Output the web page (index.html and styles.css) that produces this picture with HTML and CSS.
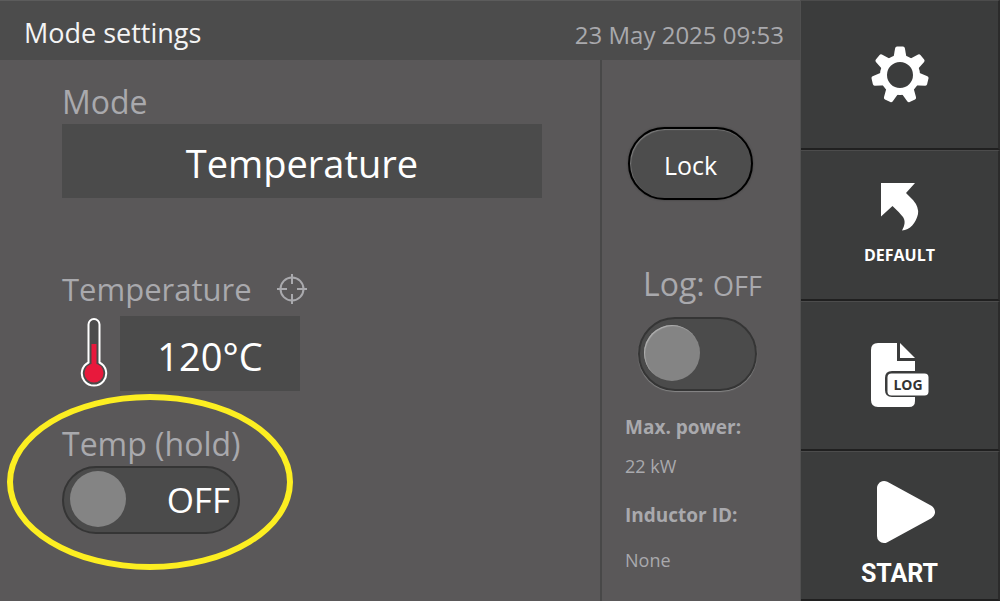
FILE: index.html
```html
<!DOCTYPE html>
<html lang="en">
<head>
    <meta charset="UTF-8">
    <meta name="viewport" content="width=device-width, initial-scale=1.0">
    <title>Mode settings</title>
    <link rel="stylesheet" href="styles.css">
</head>
<body>
    <div class="screen">
        <main class="main">
            <header class="topbar">
                <h1>Mode settings</h1>
                <time datetime="2025-05-23T09:53">23 May 2025 09:53</time>
            </header>

            <div class="content">
                <section class="settings">
                    <div class="group">
                        <label class="caption" for="mode">Mode</label>
                        <button type="button" class="mode-btn" id="mode">Temperature</button>
                    </div>

                    <div class="group">
                        <div class="caption-row">
                            <label class="caption" for="temperature">Temperature</label>
                            <svg class="target" viewBox="0 0 32 32" aria-hidden="true">
                                <circle cx="16" cy="16" r="11.5"/>
                                <path d="M16 1v10M16 21v10M1 16h10M21 16h10"/>
                            </svg>
                        </div>
                        <div class="temp-row">
                            <svg class="thermometer" viewBox="0 0 28 70" aria-hidden="true">
                                <path class="tube" d="M8.5 7.5a5.5 5.5 0 0 1 11 0V45.5a12.2 12.2 0 1 1 -11 0Z"/>
                                <circle class="mercury" cx="14" cy="56" r="9.5"/>
                                <rect class="mercury" x="11.5" y="27" width="5" height="24"/>
                            </svg>
                            <input type="text" class="temp-input" id="temperature" value="120°C">
                        </div>
                    </div>

                    <div class="group hold">
                        <label class="caption" for="hold">Temp (hold)</label>
                        <label class="toggle toggle-text">
                            <input type="checkbox" id="hold">
                            <span>OFF</span>
                        </label>
                    </div>
                </section>

                <aside class="status">
                    <button type="button" class="lock-btn">Lock</button>

                    <div class="log">
                        <label class="caption" for="log">Log: <small>OFF</small></label>
                        <label class="toggle toggle-log">
                            <input type="checkbox" id="log">
                        </label>
                    </div>

                    <dl class="info">
                        <dt>Max. power:</dt>
                        <dd>22 kW</dd>
                        <dt>Inductor ID:</dt>
                        <dd>None</dd>
                    </dl>
                </aside>
            </div>
        </main>

        <nav class="actions">
            <button type="button" aria-label="Settings">
                <svg class="icon-gear" viewBox="0 0 58 58" aria-hidden="true">
                    <path id="tooth" d="M22 14L24.2 2Q24.5 .5 26 .5H32Q33.5 .5 33.8 2L36 14Z"/>
                    <use href="#tooth" transform="rotate(51.43 29 29)"/>
                    <use href="#tooth" transform="rotate(102.86 29 29)"/>
                    <use href="#tooth" transform="rotate(154.29 29 29)"/>
                    <use href="#tooth" transform="rotate(205.71 29 29)"/>
                    <use href="#tooth" transform="rotate(257.14 29 29)"/>
                    <use href="#tooth" transform="rotate(308.57 29 29)"/>
                    <circle class="gear-ring" cx="29" cy="29" r="16.5"/>
                </svg>
            </button>
            <button type="button">
                <svg class="icon-arrow" viewBox="0 0 38 48" aria-hidden="true">
                    <path d="M0 0H34L25 10L32 17Q38 24 37 31C35 40 29 47 21 47.5C24 42 24.5 38 22 34Q18 29 11.5 23L0 33.5Z"/>
                </svg>
                <span class="label-default">DEFAULT</span>
            </button>
            <button type="button">
                <svg class="icon-log" viewBox="0 0 58 64" aria-hidden="true">
                    <path d="M7 0H26V18H44V28H21Q14 28 14 35V47Q14 54 21 54H44V58Q44 64 38 64H7Q0 64 0 57V7Q0 0 7 0Z"/>
                    <path d="M29 0L44 15H29Z"/>
                    <rect x="16.5" y="30.5" width="41" height="22" rx="4"/>
                    <text x="37" y="47" text-anchor="middle">LOG</text>
                </svg>
            </button>
            <button type="button" class="start-btn">
                <svg class="icon-play" viewBox="0 0 72 64" aria-hidden="true">
                    <path d="M20 8V56L64 32Z"/>
                </svg>
                <span class="label-start">START</span>
            </button>
        </nav>
    </div>
</body>
</html>
```
FILE: styles.css
```css
* {
    box-sizing: border-box;
}

body {
    margin: 0;
    font-family: "Open Sans", "Noto Sans", sans-serif;
    background-color: #5a5859;
    color: #a9a9ad;
}

button,
input {
    font-family: inherit;
    color: #ffffff;
    margin: 0;
    padding: 0;
    border: none;
}

button,
.toggle {
    cursor: pointer;
}

.screen {
    display: grid;
    grid-template-columns: 4fr 1fr;
    min-height: 100vh;
}

.main {
    display: flex;
    flex-direction: column;
}

/* Top bar */
.topbar {
    display: flex;
    justify-content: space-between;
    align-items: center;
    height: 60px;
    padding: 8px 16px 0 24px;
    background-color: #4c4c4c;
    border-top: 1px solid #5c5c5c;
}

.topbar h1 {
    margin: 0 0 4px;
    font-size: 27px;
    font-weight: normal;
    color: #f4f4f4;
}

.topbar time {
    font-size: 24px;
}

.content {
    flex: 1;
    display: grid;
    grid-template-columns: 3fr 1fr;
}

/* Left side */
.settings {
    display: flex;
    flex-direction: column;
    padding: 22px 58px 0 62px;
}

.caption {
    font-size: 32px;
    line-height: 40px;
}

.caption-row .caption {
    font-size: 31px;
}

.group {
    display: flex;
    flex-direction: column;
    gap: 2px;
}

.mode-btn {
    height: 74px;
    margin-bottom: 71px;
    padding-top: 4px;
    background-color: #4b4b4b;
    font-size: 38px;
}

.caption-row {
    display: flex;
    align-items: center;
    gap: 24px;
}

.target {
    width: 32px;
    height: 32px;
    fill: none;
    stroke: #a9a9ad;
    stroke-width: 2;
}

.temp-row {
    display: flex;
    align-items: center;
    gap: 12px;
    margin: 5px 0 33px;
    padding-left: 18px;
}

.thermometer {
    width: 28px;
    height: 70px;
    margin-bottom: 4px;
}

.tube {
    fill: #4b4b4b;
    stroke: #ffffff;
    stroke-width: 2;
}

.mercury {
    fill: #e8193c;
}

.temp-input {
    width: 180px;
    height: 75px;
    padding-top: 4px;
    background-color: #4b4b4b;
    font-size: 38px;
    text-align: center;
}

/* Toggles */
.toggle {
    display: flex;
    align-items: center;
    background-color: #4b4b4b;
    border: 2px solid #353535;
    border-radius: 40px;
}

.toggle input {
    appearance: none;
    width: 56px;
    height: 56px;
    border-radius: 50%;
    background-color: #848484;
    cursor: pointer;
}

.toggle-text {
    justify-content: space-between;
    height: 68px;
    padding: 0 8px 2px 6px;
    font-size: 35px;
    color: #ffffff;
}

.toggle-log {
    width: 119px;
    height: 74px;
    padding: 0 4px 2px;
    box-shadow: 0 1px 1px #888888;
}

.toggle-log input {
    box-shadow: inset 1px 1px 1px #b0b0b0;
}

/* Highlight ring around the hold setting */
.hold {
    position: relative;
    width: 178px;
    white-space: nowrap;
}

.hold::after {
    content: "";
    position: absolute;
    inset: -30px -53px -36px -55px;
    border: 6px solid #fcee21;
    border-radius: 50%;
    pointer-events: none;
}

/* Right side */
.status {
    display: flex;
    flex-direction: column;
    align-items: flex-start;
    padding: 67px 0 0 23px;
    border-left: 2px solid #484848;
}

.lock-btn {
    width: 125px;
    height: 73px;
    margin-left: 3px;
    padding-top: 2px;
    background-color: #4d4d4d;
    border: 2px solid #000000;
    border-radius: 40px;
    box-shadow: 0 0 2px #3a3a3a, inset 1px 1px 1px #7a7a7a;
    font-size: 25px;
}

.log {
    display: flex;
    flex-direction: column;
    align-items: flex-start;
    gap: 11px;
    margin: 64px 0 0 13px;
}

.log .caption {
    padding-left: 5px;
}

.log small {
    font-size: 27px;
}

.info {
    margin: 24px 0 0;
    font-size: 19px;
    line-height: 24px;
}

.info dt {
    font-weight: bold;
}

.info dd {
    margin: 15px 0 25px;
    font-size: 18px;
}

.info dd:last-child {
    margin-top: 21px;
}

/* Action buttons */
.actions {
    display: grid;
    grid-template-rows: repeat(4, 1fr);
    background-color: #3b3c3c;
    border-left: 1px solid #505050;
}

.actions button {
    display: flex;
    flex-direction: column;
    align-items: center;
    justify-content: center;
    background-color: #3b3c3c;
    border-top: 1px solid #4c4c4c;
    border-right: 2px solid #2b2b2b;
    border-bottom: 2px solid #202020;
    font-weight: bold;
}

.actions svg {
    fill: #ffffff;
}

.icon-gear {
    width: 58px;
    height: 58px;
}

.gear-ring {
    fill: none;
    stroke: #ffffff;
    stroke-width: 7;
}

.icon-arrow {
    width: 38px;
    height: 48px;
}

.label-default {
    margin-top: 12px;
    font-size: 16px;
    line-height: 24px;
}

.icon-log {
    width: 58px;
    height: 64px;
}

.icon-log text {
    font-size: 14px;
    fill: #333333;
}

.actions .start-btn {
    padding-top: 20px;
}

.icon-play {
    width: 72px;
    height: 64px;
}

.icon-play path {
    stroke: #ffffff;
    stroke-width: 14;
    stroke-linejoin: round;
}

.label-start {
    margin-top: 14px;
    font-family: Roboto, sans-serif;
    font-size: 25px;
    line-height: 32px;
}
```
